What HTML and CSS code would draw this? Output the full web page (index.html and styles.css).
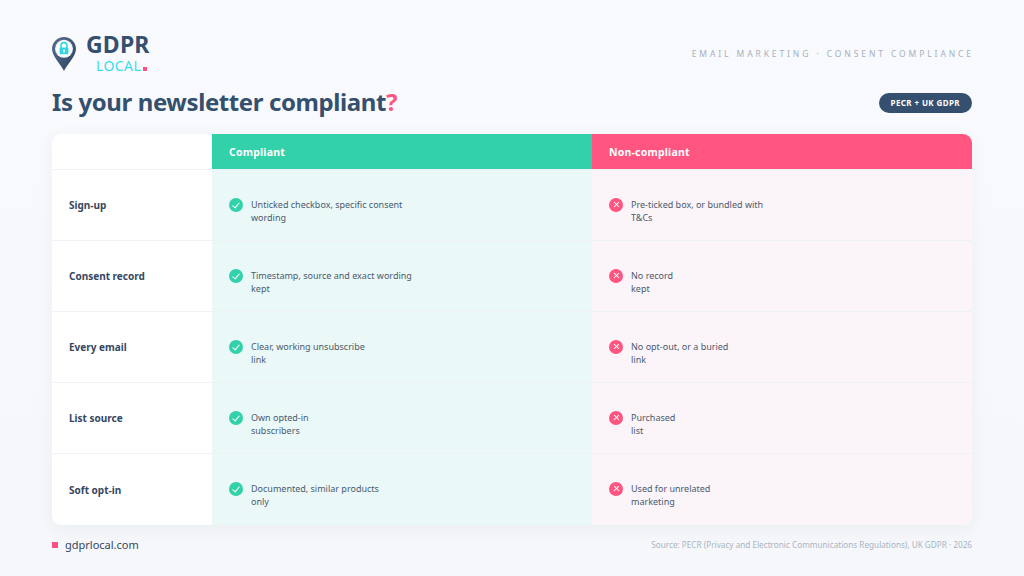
FILE: index.html
```html
<!DOCTYPE html>
<html lang="en">
<head>
<meta charset="utf-8">
<title>Is your newsletter compliant?</title>
<link rel="stylesheet" href="styles.css">
</head>
<body>
<div class="page">
  <header class="top">
    <div class="brand">
      <div class="logo">
        <svg class="pin" width="26" height="36" viewBox="0 0 26 36">
          <defs>
            <linearGradient id="pg" x1="0" y1="0" x2="1" y2="1">
              <stop offset="0" stop-color="#5a7090"/>
              <stop offset="1" stop-color="#2c4260"/>
            </linearGradient>
          </defs>
          <path d="M13 1 C6.4 1 1 6.3 1 12.8 C1 20.5 9 27 13 35 C17 27 25 20.5 25 12.8 C25 6.3 19.6 1 13 1 Z" fill="url(#pg)"/>
          <circle cx="13" cy="12.8" r="9" fill="#f2f6fa"/>
          <circle cx="13" cy="12.8" r="7.6" fill="#ffffff"/>
          <path d="M10 12 V9.6 a3 3 0 0 1 6 0 V12" fill="none" stroke="#33d4e4" stroke-width="1.6"/>
          <rect x="8.6" y="11.6" width="8.8" height="6.6" rx="1" fill="#33d4e4"/>
          <circle cx="13" cy="14.6" r="1" fill="#ffffff"/>
          <rect x="12.5" y="14.8" width="1" height="2" fill="#ffffff"/>
        </svg>
        <div class="wordmark">
          <span class="gdpr">GDPR</span>
          <span class="local">LOCAL<i class="dot"></i></span>
        </div>
      </div>
      <h1 class="title">Is your newsletter compliant<span class="q">?</span></h1>
    </div>
    <div class="meta">
      <div class="eyebrow">EMAIL MARKETING · CONSENT COMPLIANCE</div>
      <div class="badge">PECR + UK GDPR</div>
    </div>
  </header>

  <main class="card">
    <div class="row head">
      <div class="label"></div>
      <div class="cell good-h">Compliant</div>
      <div class="cell bad-h">Non-compliant</div>
    </div>
    <div class="row">
      <div class="label">Sign-up</div>
      <div class="cell good"><span class="ic ok"></span><p>Unticked checkbox, specific consent<br>wording</p></div>
      <div class="cell bad"><span class="ic no"></span><p>Pre-ticked box, or bundled with<br>T&amp;Cs</p></div>
    </div>
    <div class="row">
      <div class="label">Consent record</div>
      <div class="cell good"><span class="ic ok"></span><p>Timestamp, source and exact wording<br>kept</p></div>
      <div class="cell bad"><span class="ic no"></span><p>No record<br>kept</p></div>
    </div>
    <div class="row">
      <div class="label">Every email</div>
      <div class="cell good"><span class="ic ok"></span><p>Clear, working unsubscribe<br>link</p></div>
      <div class="cell bad"><span class="ic no"></span><p>No opt-out, or a buried<br>link</p></div>
    </div>
    <div class="row">
      <div class="label">List source</div>
      <div class="cell good"><span class="ic ok"></span><p>Own opted-in<br>subscribers</p></div>
      <div class="cell bad"><span class="ic no"></span><p>Purchased<br>list</p></div>
    </div>
    <div class="row last">
      <div class="label">Soft opt-in</div>
      <div class="cell good"><span class="ic ok"></span><p>Documented, similar products<br>only</p></div>
      <div class="cell bad"><span class="ic no"></span><p>Used for unrelated<br>marketing</p></div>
    </div>
  </main>

  <footer class="foot">
    <div class="site"><i class="sq"></i>gdprlocal.com</div>
    <div class="source">Source: PECR (Privacy and Electronic Communications Regulations), UK GDPR · 2026</div>
  </footer>
</div>
</body>
</html>
```

FILE: styles.css
```css
* { box-sizing: border-box; margin: 0; padding: 0; }
html, body { width: 1024px; height: 576px; overflow: hidden; }
body {
  background: linear-gradient(180deg, #f9fafd 0%, #f5f7fa 100%);
  font-family: "Noto Sans", "Open Sans", sans-serif;
  color: #34475f;
}
.page {
  width: 1024px;
  height: 576px;
  padding: 34px 52px 0 52px;
  display: flex;
  flex-direction: column;
}
.top {
  display: flex;
  justify-content: space-between;
  align-items: flex-start;
  height: 100px;
}
.logo { display: flex; align-items: flex-start; }
.pin { display: block; margin-top: 2px; margin-left: -1px; }
.wordmark { display: flex; flex-direction: column; margin-left: 9px; }
.gdpr {
  font-size: 23px;
  font-weight: 700;
  line-height: 21px;
  color: #34506e;
  letter-spacing: 0.2px;
}
.local {
  font-size: 14px;
  line-height: 14px;
  color: #3bdbec;
  margin-left: 10px;
  margin-top: 4px;
  letter-spacing: 0.4px;
  display: flex;
  align-items: flex-end;
}
.dot {
  display: inline-block;
  width: 4px; height: 4px;
  background: #ff4f80;
  margin-left: 2px;
  margin-bottom: 2px;
}
.title {
  margin-top: 15px;
  font-size: 24px;
  font-weight: 700;
  line-height: 28px;
  color: #34506e;
  letter-spacing: -0.4px;
}
.q { color: #ff5580; }
.meta { display: flex; flex-direction: column; align-items: flex-end; }
.eyebrow {
  margin-top: 14px;
  font-size: 8.5px;
  letter-spacing: 2.9px;
  color: #a5b0c0;
  margin-right: -2px;
}
.badge {
  margin-top: 34px;
  background: #35506e;
  color: #ffffff;
  font-size: 8px;
  font-weight: 700;
  height: 20px;
  line-height: 20px;
  padding: 0 12px;
  border-radius: 10px;
  letter-spacing: 0.4px;
}

.card {
  background: #ffffff;
  border-radius: 9px;
  overflow: hidden;
  box-shadow: 0 4px 18px rgba(52, 80, 110, 0.06);
  display: flex;
  flex-direction: column;
  height: 391px;
}
.row {
  display: grid;
  grid-template-columns: 160px 380px 380px;
  height: 71px;
  border-bottom: 1px solid #eef1f5;
}
.row.last { border-bottom: none; }
.row.head { height: 36px; }
.label {
  display: flex;
  align-items: center;
  padding-left: 17px;
  font-size: 10px;
  font-weight: 700;
  color: #34475f;
}
.cell {
  display: flex;
  align-items: flex-start;
  padding-left: 17px;
  padding-top: 28px;
  font-size: 9px;
  color: #4a5b70;
}
.cell p { line-height: 13px; margin-left: 8px; }
.good-h, .bad-h {
  color: #ffffff;
  font-weight: 700;
  font-size: 10.5px;
  letter-spacing: 0.2px;
  align-items: center;
  padding-top: 0;
}
.good-h { background: #33d1aa; }
.bad-h { background: #ff5580; }
.good { background: #eaf8f7; }
.bad { background: #fbf4f8; }
.ic {
  width: 14px; height: 14px;
  border-radius: 50%;
  flex: none;
  position: relative;
}
.ok { background: #33d1aa; }
.no { background: #ff5580; }
.ok::after {
  content: "";
  position: absolute;
  left: 5px; top: 2.8px;
  width: 3px; height: 6px;
  border-right: 1.4px solid #fff;
  border-bottom: 1.4px solid #fff;
  transform: rotate(40deg);
}
.no::before, .no::after {
  content: "";
  position: absolute;
  left: 3.5px; top: 6.4px;
  width: 7px; height: 1.3px;
  background: #fff;
  transform: rotate(45deg);
}
.no::after { transform: rotate(-45deg); }

.foot {
  display: flex;
  justify-content: space-between;
  align-items: center;
  margin-top: 12px;
}
.site {
  display: flex;
  align-items: center;
  font-size: 11px;
  color: #34475f;
}
.sq {
  display: inline-block;
  width: 6px; height: 6px;
  background: #ff4f80;
  margin-right: 7px;
}
.source {
  font-size: 8.2px;
  color: #a9b4c2;
}
```
